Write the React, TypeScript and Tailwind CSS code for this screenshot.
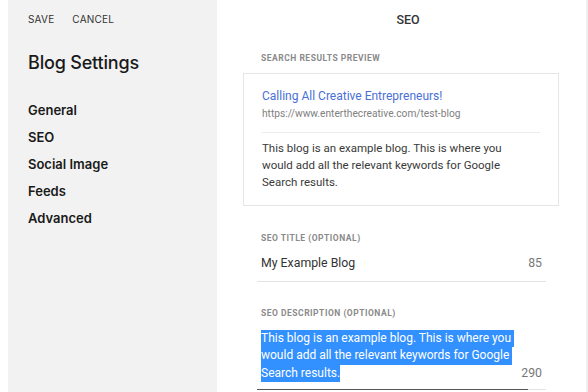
import React from "react";

const navItems = ["General", "SEO", "Social Image", "Feeds", "Advanced"];

const descLines = [
  "This blog is an example blog. This is where you ",
  "would add all the relevant keywords for Google ",
  "Search results.",
];

const App: React.FC = () => {
  return (
    <div className="flex h-[392px] w-[588px] overflow-hidden bg-white text-[#1a1a1a]">
      <div className="w-2 shrink-0 bg-white" />
      <aside className="w-[209px] shrink-0 bg-[#f2f2f2] px-5 pt-3 font-['Inter',sans-serif]">
        <div className="flex gap-[18px] text-[10px] leading-[14px] tracking-[0.02em] text-[#333]">
          <span>SAVE</span>
          <span>CANCEL</span>
        </div>
        <h1 className="mt-[26px] text-[18px] leading-[22px] font-medium tracking-[-0.01em]">
          Blog Settings
        </h1>
        <nav className="mt-[23px] flex flex-col">
          {navItems.map((item) => (
            <div key={item} className="text-[13px] leading-[27px] font-semibold">
              {item}
            </div>
          ))}
        </nav>
      </aside>
      <main className="flex-1 pl-[26px] pr-[27px] font-['Roboto',sans-serif]">
        <div className="pt-3 pl-[14px] text-center text-[12.5px] leading-4 font-medium text-[#333]">
          SEO
        </div>
        <Label className="mt-6 pl-[18px]">Search Results Preview</Label>
        <div className="mt-[9px] border border-[#e6e6e6] px-[18px] pt-[14px] pb-[14px]">
          <div className="text-[12px] leading-4 text-[#4a6fd6]">
            Calling All Creative Entrepreneurs!
          </div>
          <div className="mt-1 text-[10.2px] leading-3 text-[#808080]">
            https://www.enterthecreative.com/test-blog
          </div>
          <div className="mt-3 h-px bg-[#ececec]" />
          <p className="pt-[7px] text-[11.5px] leading-[17px] whitespace-pre text-[#3a3a3a]">
            {descLines.join("\n")}
          </p>
        </div>

        <Label className="mt-[26px] pl-[18px]">SEO Title (Optional)</Label>
        <div className="mt-[11px] ml-[14px] mr-[13px] border-b border-[#e3e3e3] pb-[10px]">
          <div className="flex justify-between pl-1 pr-1 text-[12.3px] leading-4 text-[#333]">
            <span>My Example Blog</span>
            <span className="text-[#777]">85</span>
          </div>
        </div>

        <Label className="mt-[25px] pl-[18px]">SEO Description (Optional)</Label>
        <div className="mt-[11px] ml-[14px] mr-[13px]">
          <div className="flex items-end justify-between pb-[7px] pl-1">
            <div className="text-[12px] leading-[17.3px] text-white">
              {descLines.map((line) => (
                <div key={line} className="w-fit bg-[#3390ff] whitespace-pre">
                  {line}
                </div>
              ))}
            </div>
            <span className="pr-1 text-[12.3px] leading-[17px] text-[#777]">
              290
            </span>
          </div>
          <div className="flex h-px">
            <div className="w-[271px] bg-[#555]" />
            <div className="flex-1 bg-[#e3e3e3]" />
          </div>
        </div>
      </main>
      <div className="w-[2px] shrink-0 bg-[#f0f0f0]" />
    </div>
  );
};

const Label: React.FC<{ children: React.ReactNode; className?: string }> = ({
  children,
  className,
}) => (
  <div
    className={`text-[8.5px] leading-3 font-bold tracking-[0.06em] text-[#8a8a8a] uppercase ${className ?? ""}`}
  >
    {children}
  </div>
);

export default App;
